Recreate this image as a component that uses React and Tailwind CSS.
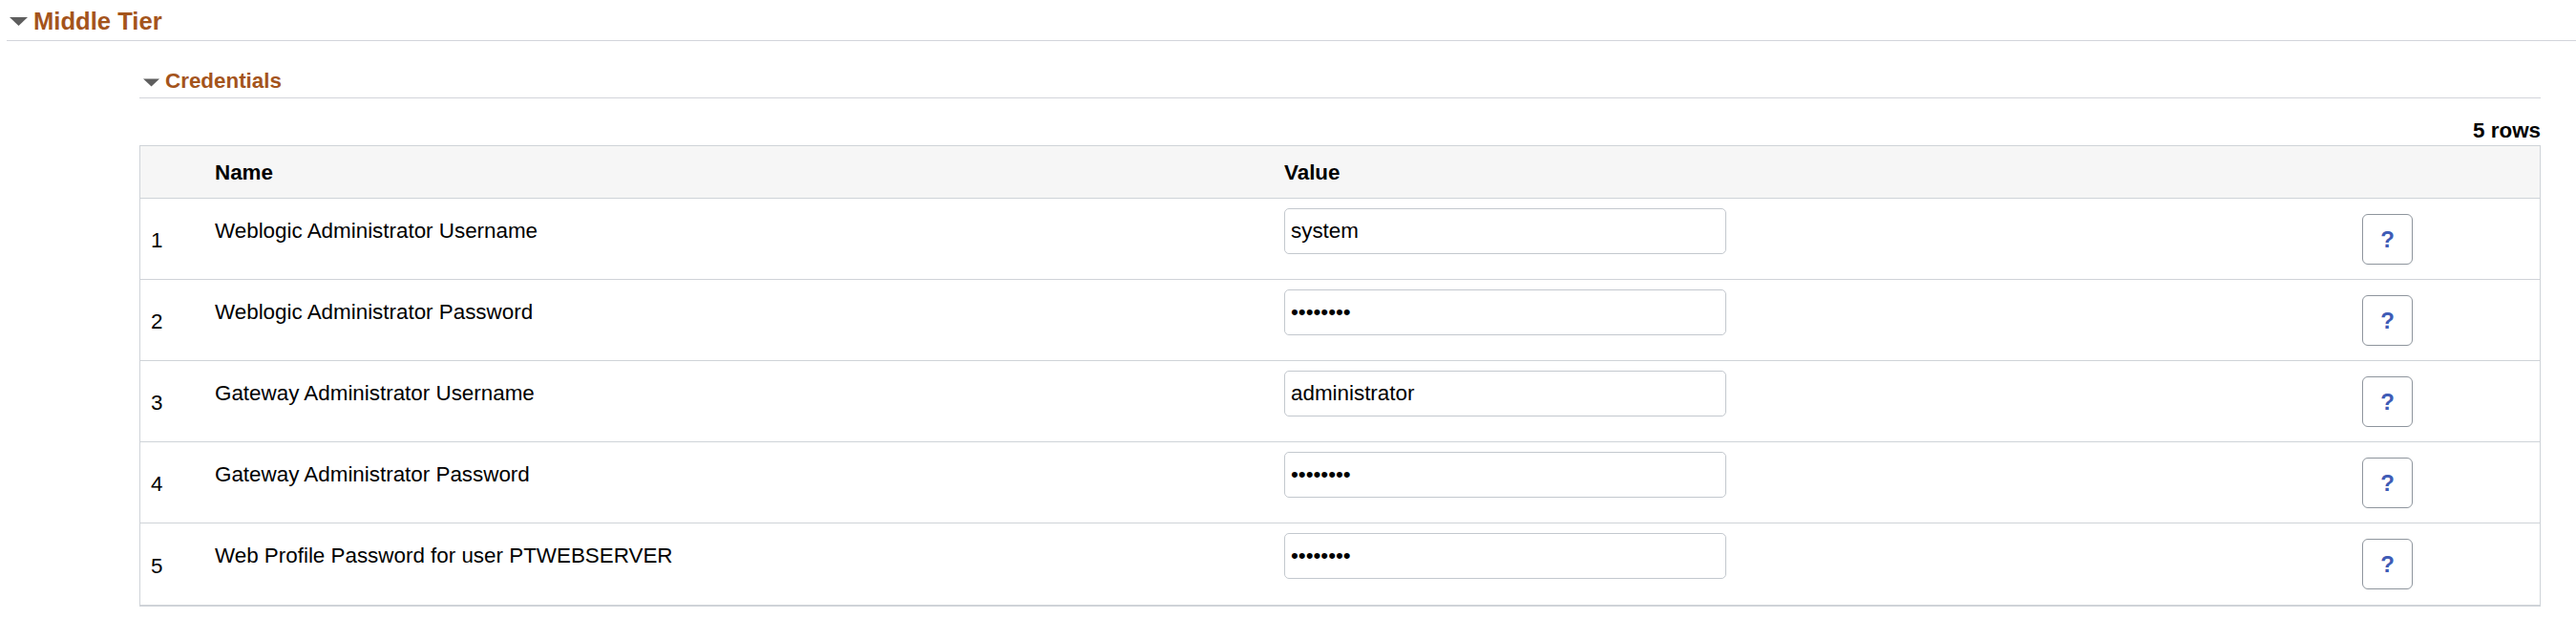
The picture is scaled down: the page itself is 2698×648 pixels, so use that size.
import React from "react";

const rows = [
  { n: 1, name: "Weblogic Administrator Username", value: "system" },
  { n: 2, name: "Weblogic Administrator Password", value: "••••••••" },
  { n: 3, name: "Gateway Administrator Username", value: "administrator" },
  { n: 4, name: "Gateway Administrator Password", value: "••••••••" },
  { n: 5, name: "Web Profile Password for user PTWEBSERVER", value: "••••••••" },
];

function Tri({ className }) {
  return (
    <svg width="19" height="9" viewBox="0 0 19 9" className={className}>
      <polygon points="0,0 19,0 9.5,9" fill="#5e5e5e" />
    </svg>
  );
}

export default function App() {
  return (
    <div className="w-[2698px] h-[648px] bg-white text-black font-['Liberation_Sans',Arial,sans-serif] overflow-hidden">
      {/* Middle Tier header */}
      <div className="ml-[7px] pt-[8px] pb-[5px] border-b border-[#d3d5db] flex items-center">
        <div className="h-[29px] flex items-center">
          <Tri className="ml-[3px]" />
          <span className="ml-[6px] text-[25.6px] leading-[29px] font-bold text-[#a4541c]">Middle Tier</span>
        </div>
      </div>

      <div className="ml-[146px] w-[2515px]">
        {/* Credentials header */}
        <div className="mt-[29px] pb-[5px] border-b border-[#d3d5db] flex items-center h-[31px]">
          <Tri className="ml-[4px] w-[17px] h-[9px] mt-[3px]" />
          <span className="ml-[6px] text-[22.4px] leading-[25px] font-bold text-[#a4541c]">Credentials</span>
        </div>

        {/* rows count */}
        <div className="mt-[21px] mb-[3px] text-right text-[22.4px] leading-[25px] font-bold">5 rows</div>

        {/* Table */}
        <div className="border border-b-2 border-[#cfd3d8]">
          <div className="h-[55px] bg-[#f6f6f6] border-b border-[#cfd3d8] flex items-center text-[22.4px] leading-[25px] font-bold">
            <div className="w-[78px]" />
            <div className="w-[1120px]">Name</div>
            <div>Value</div>
          </div>
          {rows.map((r, i) => (
            <div
              key={r.n}
              className={
                "h-[85px] flex items-stretch text-[22.4px] leading-[25px] " +
                (i < rows.length - 1 ? "border-b border-[#cfd3d8]" : "")
              }
            >
              <div className="w-[78px] pl-[11px] flex items-center pt-[3px]">{r.n}</div>
              <div className="w-[1120px] pt-[21px]">{r.name}</div>
              <div className="w-[1129px] pt-[10px]">
                <input
                  type="text"
                  readOnly
                  value={r.value}
                  className="w-[463px] h-[48px] border border-[#c3c8ce] rounded-[5px] px-[6px] text-[22.4px] leading-[25px] text-black bg-white outline-none font-['Liberation_Sans',Arial,sans-serif]"
                />
              </div>
              <div className="flex items-center">
                <button className="w-[53px] h-[53px] border border-[#8e959d] rounded-[6px] bg-white flex items-center justify-center text-[24px] font-bold text-[#3f5cb6] font-['Liberation_Sans',Arial,sans-serif]">
                  ?
                </button>
              </div>
            </div>
          ))}
        </div>
      </div>
    </div>
  );
}
